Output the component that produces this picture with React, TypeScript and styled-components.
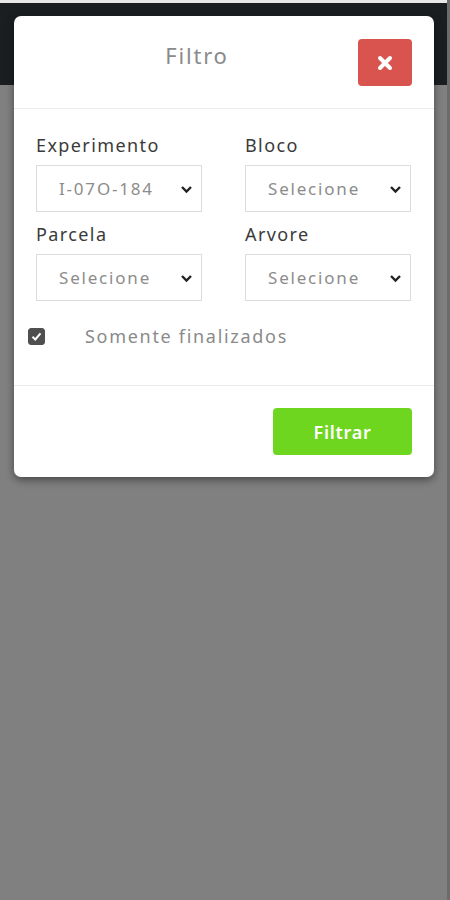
import React, { useState } from "react";
import styled, { createGlobalStyle } from "styled-components";

const GlobalStyle = createGlobalStyle`
  html, body {
    margin: 0;
    padding: 0;
    height: 100%;
    background: #808080;
    font-family: "Noto Sans", "Open Sans", sans-serif;
  }
  #root {
    min-height: 100%;
  }
`;

const fields = [
  { label: "Experimento", value: "I-07O-184" },
  { label: "Bloco", value: "Selecione" },
  { label: "Parcela", value: "Selecione" },
  { label: "Arvore", value: "Selecione" },
];

const App = () => {
  const [onlyDone, setOnlyDone] = useState(true);

  return (
    <Page>
      <GlobalStyle />
      <TopLine />
      <NavBar />
      <Modal>
        <Header>
          <Title>Filtro</Title>
          <CloseButton type="button" aria-label="Fechar">
            <svg width="18" height="18" viewBox="0 0 18 18">
              <path d="M4 4 L14 14 M14 4 L4 14" stroke="#fff" strokeWidth="4" strokeLinecap="round" />
            </svg>
          </CloseButton>
        </Header>
        <Body>
          <FieldGrid>
            {fields.map((f) => (
              <Field key={f.label}>
                <Label>{f.label}</Label>
                <SelectBox>
                  <SelectText>{f.value}</SelectText>
                  <Chevron width="13" height="9" viewBox="0 0 13 9">
                    <path d="M2 2 L6.5 6.5 L11 2" stroke="#222" strokeWidth="2.4" fill="none" />
                  </Chevron>
                </SelectBox>
              </Field>
            ))}
          </FieldGrid>
          <CheckRow onClick={() => setOnlyDone(!onlyDone)}>
            <CheckBox checked={onlyDone}>
              {onlyDone && (
                <svg width="13" height="13" viewBox="0 0 13 13">
                  <path d="M2.5 6.8 L5.3 9.5 L10.5 3.3" stroke="#fff" strokeWidth="2" fill="none" />
                </svg>
              )}
            </CheckBox>
            <CheckLabel>Somente finalizados</CheckLabel>
          </CheckRow>
        </Body>
        <Footer>
          <FilterButton type="button">Filtrar</FilterButton>
        </Footer>
      </Modal>
    </Page>
  );
};

const Page = styled.div`
  position: relative;
  min-height: 900px;
  background: #808080;
  border-right: 3px solid #6c6c6c;
  box-sizing: border-box;
`;

const TopLine = styled.div`
  height: 3px;
  background: #e8e8e8;
`;

const NavBar = styled.div`
  height: 82px;
  background: #1b1e21;
`;

const Modal = styled.div`
  position: absolute;
  top: 16px;
  left: 14px;
  width: 420px;
  background: #fff;
  border-radius: 7px;
  box-shadow: 0 3px 8px rgba(0, 0, 0, 0.45);
  display: flex;
  flex-direction: column;
`;

const Header = styled.div`
  display: flex;
  align-items: center;
  padding: 23px 22px 22px 22px;
  border-bottom: 1px solid #e9ecef;
`;

const Title = styled.h5`
  flex: 1;
  margin: 0;
  text-align: center;
  font-size: 22px;
  font-weight: 400;
  color: #8a8a8a;
  letter-spacing: 1.8px;
  margin-top: -16px;
`;

const CloseButton = styled.button`
  width: 54px;
  height: 47px;
  border: none;
  border-radius: 4px;
  background: #d9534f;
  display: flex;
  align-items: center;
  justify-content: center;
  padding: 0;
  cursor: pointer;
`;

const Body = styled.div`
  padding: 25px 22px 37px 14px;
`;

const FieldGrid = styled.div`
  display: grid;
  grid-template-columns: 166px 166px;
  column-gap: 43px;
  row-gap: 11px;
  padding-left: 8px;
`;

const Field = styled.div`
  display: flex;
  flex-direction: column;
`;

const Label = styled.label`
  font-size: 18px;
  color: #3a3a3a;
  line-height: 22px;
  letter-spacing: 1.4px;
  margin-bottom: 9px;
`;

const SelectBox = styled.div`
  position: relative;
  height: 47px;
  border: 1px solid #dcdcdc;
  box-sizing: border-box;
  display: flex;
  align-items: center;
  padding-left: 22px;
`;

const SelectText = styled.span`
  font-size: 17px;
  color: #8c8c8c;
  letter-spacing: 1.8px;
`;

const Chevron = styled.svg`
  position: absolute;
  right: 8px;
  top: 19px;
`;

const CheckRow = styled.div`
  display: flex;
  align-items: center;
  margin-top: 23px;
  cursor: pointer;
`;

const CheckBox = styled.span<{ checked: boolean }>`
  width: 17px;
  height: 17px;
  border-radius: 3px;
  box-sizing: border-box;
  background: ${(p) => (p.checked ? "#4f4f4f" : "#fff")};
  border: 1px solid #4f4f4f;
  display: flex;
  align-items: center;
  justify-content: center;
`;

const CheckLabel = styled.span`
  margin-left: 40px;
  font-size: 18px;
  color: #8a8a8a;
  letter-spacing: 1.7px;
`;

const Footer = styled.div`
  display: flex;
  justify-content: flex-end;
  padding: 22px 22px 22px;
  border-top: 1px solid #e9ecef;
`;

const FilterButton = styled.button`
  width: 139px;
  height: 47px;
  border: none;
  border-radius: 4px;
  background: #6fd620;
  color: #fff;
  font-family: "Noto Sans", "Open Sans", sans-serif;
  font-size: 18px;
  font-weight: 600;
  letter-spacing: 0.7px;
  cursor: pointer;
`;

export default App;
